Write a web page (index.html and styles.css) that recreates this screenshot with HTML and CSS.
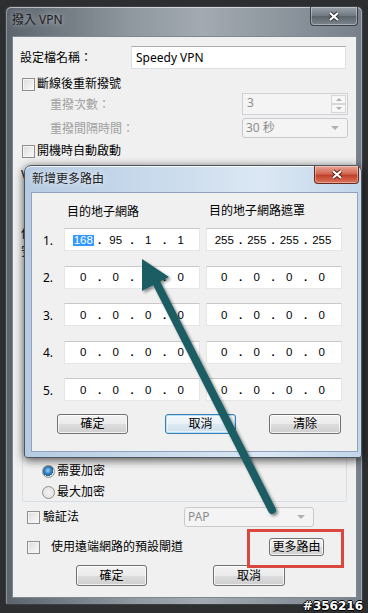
FILE: index.html
```html
<!DOCTYPE html>
<html lang="zh-Hant">
<head>
    <meta charset="UTF-8">
    <title>撥入 VPN</title>
    <link rel="stylesheet" href="styles.css">
</head>
<body>
<div class="screen">

    <div class="window">
        <div class="titlebar">
            <span class="title">撥入 VPN</span>
            <div class="close-btn close-dark">
                <svg width="14" height="11" viewBox="0 0 14 11"><path d="M3 2 L11 9 M11 2 L3 9" stroke="#333" stroke-width="4"/><path d="M3 2 L11 9 M11 2 L3 9" stroke="#fff" stroke-width="2.2"/></svg>
            </div>
        </div>

        <div class="client">
            <div class="row row-name">
                <span class="lbl-name">設定檔名稱：</span>
                <div class="textbox">Speedy VPN</div>
            </div>
            <div class="row row-check">
                <span class="checkbox"></span><span>斷線後重新撥號</span>
            </div>
            <div class="row row-spin">
                <span class="lbl-sub">重撥次數：</span>
                <div class="spin">
                    <span class="spin-val">3</span>
                    <div class="spin-btns">
                        <span class="spin-btn"><i class="tri-up"></i></span>
                        <span class="spin-btn"><i class="tri-down"></i></span>
                    </div>
                </div>
            </div>
            <div class="row row-select">
                <span class="lbl-sub">重撥間隔時間：</span>
                <div class="select select-wide">30 秒<i class="tri-down"></i></div>
            </div>
            <div class="row row-check row-autostart">
                <span class="checkbox"></span><span>開機時自動啟動</span>
            </div>

            <!-- mostly covered by the route dialog, only the first letters show -->
            <div class="covered">
                <div class="covered-line">VPN</div>
                <div class="covered-line gap-a">伺</div>
                <div class="covered-line gap-b">安</div>
            </div>

            <div class="group">
                <span class="radio-row hidden-row"><span class="radio"></span>不加密</span>
                <span class="radio-row hidden-row"><span class="radio"></span>選用加密</span>
                <span class="radio-row"><span class="radio checked"></span>需要加密</span>
                <span class="radio-row"><span class="radio"></span>最大加密</span>
            </div>

            <div class="row row-auth">
                <span class="checkbox"></span><span class="auth-lbl">驗証法</span>
                <div class="select select-pap">PAP<i class="tri-down"></i></div>
            </div>
            <div class="row row-route">
                <span class="checkbox"></span><span class="route-lbl">使用遠端網路的預設閘道</span>
                <div class="btn btn-route">更多路由</div>
            </div>
            <div class="row row-buttons">
                <div class="btn btn-main-ok">確定</div>
                <div class="btn btn-main-cancel">取消</div>
            </div>
        </div>
    </div>

    <!-- route dialog over the main window -->
    <div class="dialog">
        <div class="titlebar dialog-titlebar">
            <span class="title">新增更多路由</span>
            <div class="close-btn close-red">
                <svg width="14" height="11" viewBox="0 0 14 11"><path d="M3 2 L11 9 M11 2 L3 9" stroke="#5a1b14" stroke-width="4"/><path d="M3 2 L11 9 M11 2 L3 9" stroke="#fff" stroke-width="2.2"/></svg>
            </div>
        </div>
        <div class="dialog-client">
            <div class="route-grid route-head">
                <span></span>
                <span class="col-head">目的地子網路</span>
                <span class="col-head col-head-mask">目的地子網路遮罩</span>
            </div>
            <div class="route-rows" id="routeRows"></div>
            <div class="dialog-buttons">
                <div class="btn btn-ok">確定</div>
                <div class="btn btn-cancel focused">取消</div>
                <div class="btn btn-clear">清除</div>
            </div>
        </div>
    </div>

    <div class="highlight-box"></div>

    <svg class="arrow" width="368" height="613" viewBox="0 0 368 613">
        <defs>
            <filter id="arrowShadow" x="-30%" y="-10%" width="160%" height="130%">
                <feDropShadow dx="2" dy="2" stdDeviation="1.5" flood-color="#000" flood-opacity="0.45"/>
            </filter>
        </defs>
        <g filter="url(#arrowShadow)" fill="#1b5d63">
            <line x1="272" y1="510" x2="156" y2="282" stroke="#1b5d63" stroke-width="8" stroke-linecap="round"/>
            <polygon points="142,259 142,291 169,277"/>
        </g>
    </svg>

    <div class="watermark">#356216</div>
</div>

<script>
    const routes = [
        { net: ['168', '95', '1', '1'], mask: ['255', '255', '255', '255'] },
        { net: ['0', '0', '0', '0'], mask: ['0', '0', '0', '0'] },
        { net: ['0', '0', '0', '0'], mask: ['0', '0', '0', '0'] },
        { net: ['0', '0', '0', '0'], mask: ['0', '0', '0', '0'] },
        { net: ['0', '0', '0', '0'], mask: ['0', '0', '0', '0'] }
    ];

    function ipBox(parts, cls, selectFirst) {
        let html = `<div class="ipbox ${cls}">`;
        parts.forEach((p, i) => {
            if (i > 0) html += '<span class="ip-dot">.</span>';
            const txt = (selectFirst && i === 0) ? `<span class="ip-sel">${p}</span>` : p;
            html += `<span class="ip-oct">${txt}</span>`;
        });
        return html + '</div>';
    }

    const rowsEl = document.getElementById('routeRows');
    rowsEl.innerHTML = routes.map((r, i) =>
        `<div class="route-grid route-row">
            <span class="row-num">${i + 1}.</span>
            ${ipBox(r.net, 'ip-net', i === 0)}
            ${ipBox(r.mask, 'ip-mask', false)}
        </div>`).join('');
</script>
</body>
</html>
```

FILE: styles.css
```css
* {
    box-sizing: border-box;
}
body {
    margin: 0;
    background-color: #2d2e30;
    font-family: "Noto Sans", "Noto Sans CJK TC", sans-serif;
    font-size: 12px;
    line-height: 16px;
    color: #000;
}
.screen {
    position: relative;
    width: 368px;
    height: 613px;
    overflow: hidden;
    padding-top: 6px;
}

/* main window (aero frame) */
.window {
    margin-left: 5px;
    width: 358px;
    height: 599px;
    border: 1px solid #3a3f45;
    border-radius: 6px 6px 2px 2px;
    background: linear-gradient(to right, #5b636c 0%, #8f979f 35%, #a3aab1 55%, #77808a 100%);
    box-shadow: inset 0 1px 0 rgba(255, 255, 255, 0.55), inset 1px 0 0 rgba(255, 255, 255, 0.3), inset -1px 0 0 rgba(255, 255, 255, 0.3);
}
.titlebar {
    display: flex;
    justify-content: space-between;
    height: 29px;
    padding-right: 4px;
}
.title {
    padding-left: 6px;
    line-height: 26px;
    color: #1e1e1e;
    text-shadow: 0 0 6px rgba(255, 255, 255, 0.7);
}
.close-btn {
    width: 48px;
    height: 19px;
    border-radius: 0 0 4px 4px;
    display: flex;
    align-items: center;
    justify-content: center;
}
.close-dark {
    background: linear-gradient(#9aa2aa 0%, #6f7780 50%, #5b636b 51%, #7c858d 100%);
    border: 1px solid #3b4046;
    border-top: none;
    box-shadow: inset 0 0 0 1px rgba(255, 255, 255, 0.35);
}

.client {
    margin-left: 6px;
    width: 345px;
    height: 562px;
    background-color: #f0f0f0;
    border: 1px solid #7d8790;
    padding: 9px 7px 0 7px;
    overflow: hidden;
}
.row {
    display: flex;
    align-items: center;
}
.row-name {
    height: 23px;
}
.lbl-name {
    width: 111px;
}
.textbox {
    width: 215px;
    height: 23px;
    background: #fff;
    border: 1px solid #dcdfe3;
    border-top-color: #abadb3;
    padding: 3px 4px;
    line-height: 15px;
}
.row-check {
    height: 16px;
    margin-top: 7px;
    padding-left: 2px;
}
.checkbox {
    width: 13px;
    height: 13px;
    border: 1px solid #8e8f8f;
    background: linear-gradient(135deg, #dcdcdc, #fbfbfb);
    box-shadow: inset 0 0 0 1px #f4f4f4;
    margin-right: 2px;
    flex: none;
}
.row-spin {
    height: 22px;
    margin-top: 1px;
}
.lbl-sub {
    width: 192px;
    margin-left: 30px;
    padding-top: 2px;
    color: #a0a0a0;
}
.spin {
    width: 106px;
    height: 22px;
    border: 1px solid #cdd1d5;
    background: #f4f4f4;
    display: flex;
    justify-content: space-between;
    padding: 1px 1px 1px 4px;
}
.spin-val {
    color: #8d8d8d;
    line-height: 16px;
}
.spin-btns {
    display: flex;
    flex-direction: column;
    width: 15px;
}
.spin-btn {
    flex: 1;
    border: 1px solid #d6d6d6;
    background: #f7f7f7;
    display: flex;
    align-items: center;
    justify-content: center;
}
.tri-up, .tri-down {
    display: inline-block;
    width: 0;
    height: 0;
    border-left: 3px solid transparent;
    border-right: 3px solid transparent;
}
.tri-up {
    border-bottom: 3px solid #b0b0b0;
}
.tri-down {
    border-top: 3px solid #b0b0b0;
}
.row-select {
    height: 20px;
    margin-top: 3px;
}
.select {
    height: 20px;
    border: 1px solid #c7c9cc;
    border-radius: 3px;
    background: #f4f4f4;
    color: #8d8d8d;
    display: flex;
    align-items: center;
    justify-content: space-between;
    padding: 0 8px 0 3px;
}
.select .tri-down {
    border-left-width: 4px;
    border-right-width: 4px;
    border-top-width: 4px;
}
.select-wide {
    width: 106px;
}
.row-autostart {
    margin-top: 5px;
}

.covered {
    height: 241px;
    width: 5px;
    overflow: hidden;
    white-space: nowrap;
    padding-top: 8px;
    margin-left: 1px;
}
.covered-line {
    height: 16px;
}
.covered-line.gap-a {
    margin-top: 43px;
}
.covered-line.gap-b {
    margin-top: 2px;
}

.group {
    margin: 0 2px;
    height: 102px;
    border: 1px solid #d5dfe5;
    border-radius: 3px;
    padding: 20px 0 0 19px;
    display: flex;
    flex-direction: column;
    gap: 5px;
}
.radio-row {
    display: flex;
    align-items: center;
    height: 16px;
}
.hidden-row {
    visibility: hidden;
}
.radio {
    width: 13px;
    height: 13px;
    border-radius: 50%;
    border: 1px solid #8e8f8f;
    background: radial-gradient(circle, #f4f4f4 0%, #dcdcdc 100%);
    margin-right: 2px;
}
.radio.checked {
    background: radial-gradient(circle at 45% 40%, #9fd0f4 0%, #3b87c8 35%, #1d5e9c 60%, #e8e8e8 62%, #d8d8d8 100%);
}

.row-auth {
    height: 20px;
    margin-top: 5px;
    padding-left: 7px;
}
.auth-lbl {
    width: 141px;
    margin-left: 1px;
}
.select-pap {
    width: 130px;
}
.row-route {
    height: 18px;
    margin-top: 11px;
    padding-left: 7px;
}
.route-lbl {
    margin-left: 9px;
    width: 218px;
}
.btn {
    height: 21px;
    border: 1px solid #707070;
    border-radius: 3px;
    background: linear-gradient(#f2f2f2 0%, #ebebeb 50%, #dddddd 51%, #cfcfcf 100%);
    box-shadow: inset 0 0 0 1px rgba(255, 255, 255, 0.75);
    display: flex;
    align-items: center;
    justify-content: center;
    font-size: 12px;
}
.btn-route {
    width: 55px;
    height: 18px;
    line-height: 14px;
}
.row-buttons {
    height: 21px;
    margin-top: 9px;
    padding-left: 56px;
}
.btn-main-ok {
    width: 71px;
}
.btn-main-cancel {
    width: 72px;
    margin-left: 66px;
}

/* route dialog */
.dialog {
    position: absolute;
    left: 24px;
    top: 165px;
    width: 338px;
    height: 293px;
    border: 1px solid #4c5560;
    border-radius: 7px 7px 3px 3px;
    background: linear-gradient(to right, #b6cbe2 0%, #cadbec 40%, #dbe7f4 70%, #c2d6ea 100%);
    box-shadow: 0 2px 10px rgba(0, 0, 0, 0.7), inset 0 1px 0 rgba(255, 255, 255, 0.8);
}
.dialog-titlebar {
    height: 26px;
    padding-right: 2px;
}
.dialog-titlebar .title {
    padding-left: 7px;
    line-height: 25px;
    text-shadow: 0 0 6px rgba(255, 255, 255, 0.9);
}
.close-red {
    width: 45px;
    height: 18px;
    background: linear-gradient(#e8a496 0%, #d26a55 45%, #c2402a 55%, #d9745c 100%);
    border: 1px solid #6b2a20;
    border-top: none;
    box-shadow: inset 0 0 0 1px rgba(255, 255, 255, 0.35);
}
.dialog-client {
    margin-left: 6px;
    width: 327px;
    height: 260px;
    border: 1px solid #8fa4bc;
    background-color: #f0f0f0;
    padding-top: 11px;
}
.route-grid {
    display: grid;
    grid-template-columns: 26px 136px 136px;
    column-gap: 6px;
    align-items: center;
}
.route-head {
    height: 16px;
}
.col-head {
    padding-left: 3px;
}
.col-head-mask {
    margin-top: -3px;
}
.route-rows {
    margin-top: 8px;
    display: flex;
    flex-direction: column;
    gap: 14.5px;
}
.route-row {
    height: 23px;
}
.row-num {
    padding-left: 11px;
    padding-top: 2px;
}
.ipbox {
    height: 23px;
    background: #fff;
    border: 1px solid #e6e6e6;
    border-top-color: #c9c9c9;
    display: flex;
    align-items: center;
    font-family: "Liberation Sans", Arial, sans-serif;
    font-size: 11.5px;
}
.ip-net {
    padding-left: 6px;
}
.ip-mask {
    padding-left: 5px;
}
.ip-oct {
    width: 24.5px;
    text-align: center;
}
.ip-dot {
    width: 8px;
    text-align: center;
    font-weight: bold;
}
.ip-sel {
    background: #3399ff;
    color: #fff;
    padding: 0 1px;
    line-height: 11px;
    display: inline-block;
}
.dialog-buttons {
    display: flex;
    margin-top: 13px;
    padding-left: 25px;
}
.btn-ok {
    width: 71px;
    height: 20px;
}
.btn-cancel {
    width: 71px;
    height: 20px;
    margin-left: 37px;
}
.btn-clear {
    width: 72px;
    height: 20px;
    margin-left: 33px;
}
.btn.focused {
    border-color: #3c7fb1;
    box-shadow: inset 0 0 0 1px #b9e0f8, inset 0 0 0 2px rgba(255, 255, 255, 0.5);
    background: linear-gradient(#f1f7fb 0%, #e9f2f8 50%, #dbe9f2 51%, #cfe0ec 100%);
}

/* annotations */
.highlight-box {
    position: absolute;
    left: 247px;
    top: 529px;
    width: 97px;
    height: 39px;
    border: 3px solid #d9473f;
}
.arrow {
    position: absolute;
    left: 0;
    top: 0;
    pointer-events: none;
}
.watermark {
    position: absolute;
    right: 5px;
    bottom: 1px;
    font-family: "DejaVu Sans", sans-serif;
    font-weight: bold;
    font-size: 12px;
    line-height: 12px;
    color: #fff;
    text-shadow: 1px 0 0 #000, -1px 0 0 #000, 0 1px 0 #000, 0 -1px 0 #000;
}
```
